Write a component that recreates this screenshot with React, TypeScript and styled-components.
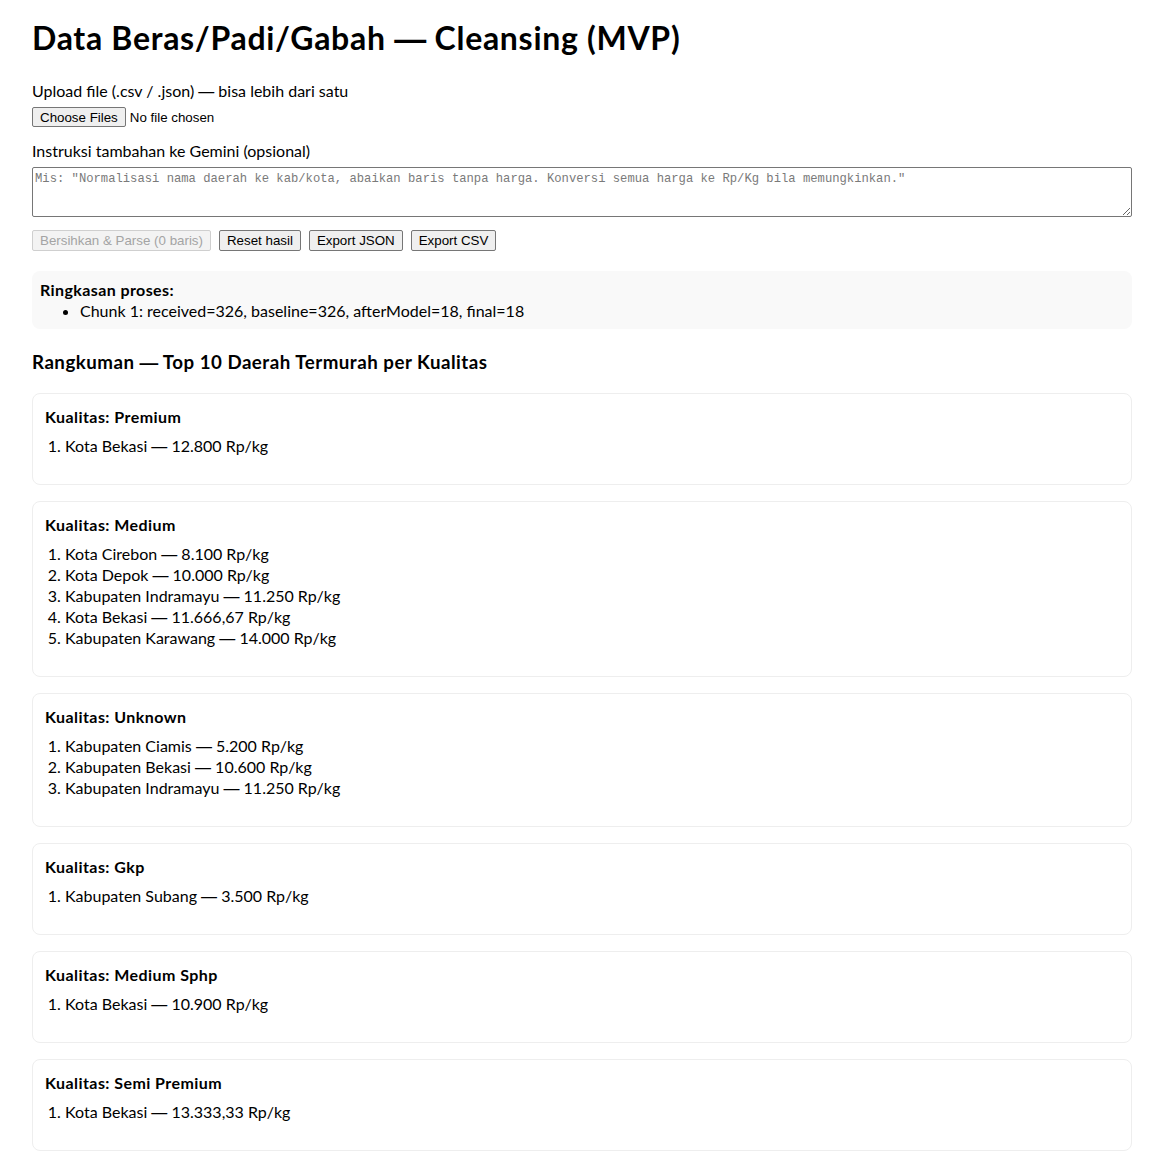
import React from "react";
import styled, { createGlobalStyle, css } from "styled-components";

const GlobalStyle = createGlobalStyle`
  html, body { margin: 0; padding: 0; background: #ffffff; }
  body {
    font-family: Lato, "Open Sans", "Noto Sans", sans-serif;
    font-size: 16px;
    color: #000000;
  }
  * { box-sizing: border-box; }
`;

const Page = styled.main`
  max-width: 1100px;
  box-sizing: content-box;
  padding: 16px 32px 24px;
`;

const Title = styled.h1`
  margin: 0 0 20px;
  font-size: 32px;
  line-height: 44px;
  font-weight: 700;
  letter-spacing: 0.7px;
`;

const Dash = styled.span`
  font-family: "Liberation Sans", Arial, sans-serif;
  letter-spacing: 0;
  line-height: 0;
`;

const Field = styled.div<{ $gap?: number }>`
  display: flex;
  flex-direction: column;
  align-items: flex-start;
  margin-bottom: ${(p) => p.$gap ?? 12}px;
`;

const Label = styled.label<{ $space?: number }>`
  display: block;
  line-height: 21.3px;
  margin-bottom: ${(p) => p.$space ?? 6}px;
`;

const controlFont = css`
  font-family: "Liberation Sans", Arial, sans-serif;
  font-size: 13.333px;
`;

const FileInput = styled.input`
  ${controlFont};
  color: #000;
  height: 20px;
  &::file-selector-button {
    ${controlFont};
    color: #000;
    background: #efefef;
    border: 1px solid #767676;
    border-radius: 2px;
    padding: 1px 7px;
    height: 20px;
    margin: 0 4px 0 0;
  }
`;

const TextArea = styled.textarea`
  display: block;
  width: 100%;
  height: 50px;
  padding: 3px 2px 2px;
  border: 1px solid #767676;
  border-radius: 2px;
  font-family: "Liberation Mono", "DejaVu Sans Mono", monospace;
  font-size: 12.2px;
  line-height: 16px;
  resize: vertical;
  &::placeholder {
    color: #7a7a7a;
  }
`;

const Actions = styled.div`
  display: flex;
  gap: 8px;
  margin-top: 13px;
`;

const Button = styled.button`
  ${controlFont};
  height: 21px;
  padding: 1px 7px;
  color: #000;
  background: #efefef;
  border: 1px solid #767676;
  border-radius: 2px;
  cursor: pointer;
  &:disabled {
    cursor: default;
    color: #a4a4a4;
    background: #f3f3f3;
    border-color: #cfcfcf;
  }
`;

const Summary = styled.section`
  margin-top: 20px;
  padding: 8px;
  background: #f9f9f9;
  border-radius: 8px;
  line-height: 21.3px;
`;

const Strong = styled.strong`
  font-weight: 700;
  letter-spacing: 0.4px;
`;

const BulletList = styled.ul`
  margin: 0;
  padding-left: 40px;
`;

const SectionTitle = styled.h3`
  margin: 21px 0 18px;
  font-size: 18.72px;
  line-height: 25px;
  font-weight: 700;
  letter-spacing: 0.5px;
`;

const Card = styled.div`
  border: 1px solid #eeeeee;
  border-radius: 8px;
  padding: 12px;
  margin-bottom: 16px;
`;

const CardTitle = styled.div`
  font-weight: 700;
  letter-spacing: 0.44px;
  line-height: 21.3px;
  margin-bottom: 8px;
`;

const RankList = styled.ol`
  margin: 0 0 15.7px;
  padding-left: 20px;
  line-height: 21px;
`;

type Group = { quality: string; items: [string, string][] };

const groups: Group[] = [
  { quality: "Premium", items: [["Kota Bekasi", "12.800"]] },
  {
    quality: "Medium",
    items: [
      ["Kota Cirebon", "8.100"],
      ["Kota Depok", "10.000"],
      ["Kabupaten Indramayu", "11.250"],
      ["Kota Bekasi", "11.666,67"],
      ["Kabupaten Karawang", "14.000"],
    ],
  },
  {
    quality: "Unknown",
    items: [
      ["Kabupaten Ciamis", "5.200"],
      ["Kabupaten Bekasi", "10.600"],
      ["Kabupaten Indramayu", "11.250"],
    ],
  },
  { quality: "Gkp", items: [["Kabupaten Subang", "3.500"]] },
  { quality: "Medium Sphp", items: [["Kota Bekasi", "10.900"]] },
  { quality: "Semi Premium", items: [["Kota Bekasi", "13.333,33"]] },
];

export default function App() {
  return (
    <>
      <GlobalStyle />
      <Page>
        <Title>
          Data Beras/Padi/Gabah <Dash>—</Dash> Cleansing (MVP)
        </Title>

        <Field $gap={13}>
          <Label htmlFor="files">
            Upload file (.csv / .json) <Dash>—</Dash> bisa lebih dari satu
          </Label>
          <FileInput id="files" type="file" multiple accept=".csv,.json" />
        </Field>

        <Field $gap={0}>
          <Label htmlFor="instr" $space={5}>
            Instruksi tambahan ke Gemini (opsional)
          </Label>
          <TextArea
            id="instr"
            rows={3}
            placeholder={'Mis: "Normalisasi nama daerah ke kab/kota, abaikan baris tanpa harga. Konversi semua harga ke Rp/Kg bila memungkinkan."'}
          />
        </Field>

        <Actions>
          <Button disabled>Bersihkan &amp; Parse (0 baris)</Button>
          <Button>Reset hasil</Button>
          <Button>Export JSON</Button>
          <Button>Export CSV</Button>
        </Actions>

        <Summary>
          <Strong>Ringkasan proses:</Strong>
          <BulletList>
            <li>Chunk 1: received=326, baseline=326, afterModel=18, final=18</li>
          </BulletList>
        </Summary>

        <SectionTitle>
          Rangkuman <Dash>—</Dash> Top 10 Daerah Termurah per Kualitas
        </SectionTitle>

        {groups.map((g) => (
          <Card key={g.quality}>
            <CardTitle>Kualitas: {g.quality}</CardTitle>
            <RankList>
              {g.items.map(([name, price], i) => (
                <li key={i}>
                  {name} <Dash>—</Dash> {price} Rp/kg
                </li>
              ))}
            </RankList>
          </Card>
        ))}
      </Page>
    </>
  );
}
